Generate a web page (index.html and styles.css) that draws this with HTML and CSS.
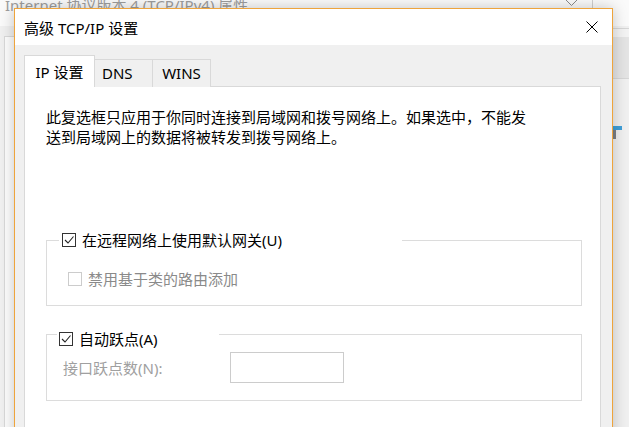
FILE: index.html
```html
<!DOCTYPE html>
<html lang="zh-CN">
<head>
<meta charset="utf-8">
<title>高级 TCP/IP 设置</title>
<link rel="stylesheet" href="styles.css">
</head>
<body>
<div class="bgwin">
  <div class="bg-title">Internet 协议版本 4 (TCP/IPv4) 属性</div>
  <div class="bg-body"><div class="bg-panel"></div></div>
  <svg class="bg-chevron" width="13" height="8" viewBox="0 0 13 8"><path d="M0.5 0.5 L6.5 6.5 L12.5 0.5" fill="none" stroke="#8a8a8a" stroke-width="1"/></svg>
  <span class="bg-vline"></span>
  <span class="bg-band"></span>
  <svg class="bg-icon" width="10" height="14" viewBox="0 0 10 14"><rect x="0" y="0" width="10" height="4" fill="#3f9fd8"/><rect x="1" y="4" width="3" height="9" fill="#7a7f86"/></svg>
</div>

<div class="dialog">
  <div class="titlebar">
    <span class="title">高级 TCP/IP 设置</span>
    <span class="close"><svg width="12" height="12" viewBox="0 0 12 12"><path d="M0.5 0.5 L11.5 11.5 M11.5 0.5 L0.5 11.5" stroke="#000" stroke-width="1" fill="none"/></svg></span>
  </div>
  <div class="dbody">
    <div class="tabs">
      <div class="tab active">IP 设置</div>
      <div class="tab dns">DNS</div>
      <div class="tab">WINS</div>
    </div>
    <div class="panel">
      <p class="desc">此复选框只应用于你同时连接到局域网和拨号网络上。如果选中，不能发送到局域网上的数据将被转发到拨号网络上。</p>

      <fieldset class="group g1">
        <legend class="glegend l1">
          <span class="crow">
            <span class="cb on"><svg width="12" height="12" viewBox="0 0 12 12"><path d="M2 6 L5 9 L10.5 2.5" fill="none" stroke="#222" stroke-width="1.1"/></svg></span>
            <span class="ctext">在远程网络上使用默认网关(U)</span>
          </span>
        </legend>
        <div class="crow sub disabled">
          <span class="cb off"></span>
          <span class="ctext">禁用基于类的路由添加</span>
        </div>
      </fieldset>

      <fieldset class="group g2">
        <legend class="glegend l2">
          <span class="crow">
            <span class="cb on"><svg width="12" height="12" viewBox="0 0 12 12"><path d="M2 6 L5 9 L10.5 2.5" fill="none" stroke="#222" stroke-width="1.1"/></svg></span>
            <span class="ctext">自动跃点(A)</span>
          </span>
        </legend>
        <div class="metric">
          <span class="mlabel">接口跃点数(N):</span>
          <span class="minput"></span>
        </div>
      </fieldset>
    </div>
  </div>
</div>
</body>
</html>
```

FILE: styles.css
```css
html, body {
  margin: 0;
  padding: 0;
}
body {
  width: 629px;
  height: 427px;
  overflow: hidden;
  position: relative;
  background: #f0f0f0;
  font-family: "Noto Sans", "Noto Sans CJK SC", sans-serif;
  font-size: 15px;
  color: #000;
}

/* background window */
.bgwin {
  position: absolute;
  left: 0;
  top: -20px;
  width: 660px;
  height: 480px;
  background: #f0f0f0;
}
.bg-title {
  box-sizing: border-box;
  height: 46px;
  padding: 15px 0 0 5px;
  line-height: 20px;
  background: #fafafa;
  color: #9d9d9d;
  white-space: nowrap;
}
.bg-body {
  padding: 10px 0 0 4px;
}
.bg-panel {
  width: 590px;
  height: 420px;
  border: 1px solid #d9d9d9;
  background: #fdfdfd;
}
.bg-chevron {
  position: absolute;
  left: 565px;
  top: 19px;
}
.bg-vline {
  position: absolute;
  left: 592px;
  top: 16px;
  width: 1px;
  height: 14px;
  background: #cfcfcf;
}
.bg-band {
  position: absolute;
  left: 600px;
  top: 48px;
  width: 60px;
  height: 49px;
  border-top: 1px solid #d6d6d6;
  border-bottom: 1px solid #d6d6d6;
  background: linear-gradient(#f3f3f3 0 8px, #e4e4e4 8px);
}
.bg-icon {
  position: absolute;
  left: 612px;
  top: 146px;
}

/* dialog */
.dialog {
  position: absolute;
  left: 14px;
  top: 8px;
  width: 597px;
  height: 440px;
  border: 1px solid #eea43c;
  background: #f0f0f0;
  box-shadow: 0 0 14px rgba(0, 0, 0, 0.22);
}
.titlebar {
  height: 36px;
  background: #fff;
  display: flex;
  align-items: center;
  justify-content: space-between;
  padding-left: 9px;
}
.title {
  line-height: 20px;
  margin-top: 1px;
}
.close {
  width: 40px;
  height: 36px;
  display: flex;
  align-items: center;
  justify-content: center;
}
.dbody {
  padding: 10px 11px 0 9px;
}

/* tabs */
.tabs {
  display: flex;
  align-items: flex-end;
  height: 32px;
  margin-bottom: -1px;
}
.tab {
  box-sizing: border-box;
  width: 58px;
  height: 28px;
  border: 1px solid #d9d9d9;
  border-left: none;
  border-bottom: none;
  background: #f0f0f0;
  text-align: center;
  line-height: 20px;
  padding-top: 3px;
}
.tab.active {
  width: 71px;
  height: 32px;
  border-left: 1px solid #d9d9d9;
  background: #fff;
  padding-top: 6px;
  position: relative;
  z-index: 1;
}
.tab.dns {
  text-align: left;
  padding-left: 7px;
}

/* panel */
.panel {
  height: 360px;
  border: 1px solid #d9d9d9;
  background: #fff;
  padding: 20px 18px 0 21px;
}
.desc {
  margin: 0;
  width: 486px;
  line-height: 20px;
}

.group {
  margin: 0;
  border: 1px solid #dcdcdc;
  min-inline-size: 0;
}
.glegend {
  padding: 0;
  box-sizing: border-box;
}
.crow {
  display: flex;
  align-items: center;
  line-height: 20px;
  white-space: nowrap;
}
.cb {
  box-sizing: border-box;
  width: 14px;
  height: 14px;
  flex: none;
  display: flex;
  align-items: center;
  justify-content: center;
  background: #fff;
  margin-right: 6px;
}
.cb.on {
  border: 1px solid #333;
}
.cb.off {
  border: 1px solid #cccccc;
}
.disabled {
  color: #8a8a8a;
}

.g1 {
  margin-top: 83px;
  padding: 0 0 16px 21px;
}
.l1 {
  width: 343px;
  margin-left: -9px;
  padding-left: 3px;
}
.sub {
  margin-top: 19px;
}

.g2 {
  margin-top: 13px;
  padding: 0 0 17px 16px;
}
.l2 {
  width: 162px;
  margin-left: -6px;
  padding: 10px 0 0 2px;
}
.metric {
  display: flex;
  align-items: center;
  margin-top: 3px;
}
.mlabel {
  width: 167px;
  line-height: 20px;
  color: #a0a0a0;
}
.minput {
  box-sizing: border-box;
  width: 114px;
  height: 31px;
  border: 1px solid #cccccc;
  background: #fff;
}
```
